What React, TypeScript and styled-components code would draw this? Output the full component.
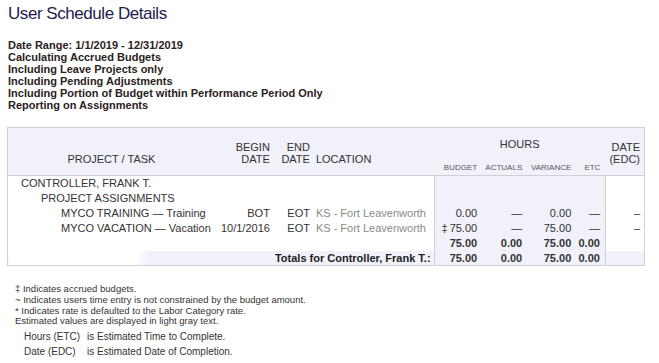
import styled, { createGlobalStyle } from 'styled-components';

const GlobalStyle = createGlobalStyle`
  body {
    margin: 0;
    background: #fff;
    font-family: 'Liberation Sans', Arial, sans-serif;
  }
`;

const Colors = {
  ink: '#2b2b2b',
  navy: '#1d1d4f',
  lavender: '#f1f1fa',
  line: '#cfcfd6',
  gray: '#8a8a8a',
};

const Page = styled.div`
  padding: 3px 8px 0 8px;
  color: ${Colors.ink};
`;

const Title = styled.h1`
  margin: 0;
  font-size: 17px;
  letter-spacing: -0.45px;
  line-height: 21px;
  font-weight: normal;
  color: ${Colors.navy};
`;

const Criteria = styled.div`
  margin-top: 15px;
  font-size: 11px;
  line-height: 12px;
  font-weight: bold;
  color: #2a2222;
`;

const Table = styled.table`
  margin-top: 16px;
  margin-left: -1px;
  border-collapse: collapse;
  table-layout: fixed;
  width: 638px;
  border: 1px solid ${Colors.line};
  font-size: 11px;
  line-height: 12px;
`;

const HeadRow = styled.tr`
  background: ${Colors.lavender};
`;

const Th = styled.th<{ align?: 'left' | 'right' | 'center'; pr?: number }>`
  font-weight: normal;
  color: #333;
  text-align: ${({ align }) => align || 'left'};
  padding: 0 ${({ pr }) => pr ?? 3}px 0 3px;
  vertical-align: bottom;
`;

const MainTh = styled(Th)`
  padding-bottom: 10px;
  border-bottom: 1px solid ${Colors.line};
`;

const GroupTh = styled(Th)`
  vertical-align: top;
  padding-top: 10px;
  height: 25px;
`;

const SubTh = styled(Th)`
  font-size: 8px;
  line-height: 9px;
  color: #555;
  padding-bottom: 3px;
  border-bottom: 1px solid ${Colors.line};
`;

const Row = styled.tr<{ total?: boolean }>`
  height: 15px;
  font-weight: ${({ total }) => (total ? 'bold' : 'normal')};
`;

const Td = styled.td<{
  indent?: number;
  align?: 'left' | 'right';
  pr?: number;
  hours?: boolean;
  edge?: boolean;
  muted?: boolean;
  shade?: boolean;
}>`
  padding: 0 ${({ pr }) => pr ?? 3}px 0 ${({ indent }) => indent ?? 3}px;
  text-align: ${({ align }) => align || 'left'};
  white-space: nowrap;
  overflow: hidden;
  color: ${({ muted }) => (muted ? Colors.gray : '#333')};
  background: ${({ hours, shade }) => (hours || shade ? Colors.lavender : 'transparent')};
  border-left: ${({ edge }) => (edge ? `1px solid ${Colors.line}` : 'none')};
`;

const TotalLabel = styled(Td)`
  background: linear-gradient(to right, #fff 128px, ${Colors.lavender} 140px);
  color: #222;
`;

const Accrued = styled.span`
  float: left;
  padding-left: 4px;
`;

const Notes = styled.div`
  margin-top: 18px;
  padding-left: 7px;
  font-size: 9.5px;
  line-height: 10.8px;
  color: #333;
`;

const Legend = styled.div`
  display: grid;
  grid-template-columns: 63px auto;
  grid-auto-rows: 15px;
  align-items: center;
  padding-left: 9px;
  margin-top: 3px;
  font-size: 10px;
`;

const widths = [207, 58, 40, 121, 46, 45, 48, 32, 39];

interface Line {
  label: string;
  indent: number;
  begin?: string;
  end?: string;
  location?: string;
  budget?: string;
  accrued?: boolean;
  actuals?: string;
  variance?: string;
  etc?: string;
  edc?: string;
}

const lines: Line[] = [
  { label: 'CONTROLLER, FRANK T.', indent: 13 },
  { label: 'PROJECT ASSIGNMENTS', indent: 33 },
  {
    label: 'MYCO TRAINING \u2014 Training',
    indent: 53,
    begin: 'BOT',
    end: 'EOT',
    location: 'KS - Fort Leavenworth',
    budget: '0.00',
    actuals: '\u2014',
    variance: '0.00',
    etc: '\u2014',
    edc: '\u2013',
  },
  {
    label: 'MYCO VACATION \u2014 Vacation',
    indent: 53,
    begin: '10/1/2016',
    end: 'EOT',
    location: 'KS - Fort Leavenworth',
    budget: '75.00',
    accrued: true,
    actuals: '\u2014',
    variance: '75.00',
    etc: '\u2014',
    edc: '\u2013',
  },
];

export default function App() {
  return (
    <Page>
      <GlobalStyle />
      <Title>User Schedule Details</Title>
      <Criteria>
        <div>Date Range: 1/1/2019 - 12/31/2019</div>
        <div>Calculating Accrued Budgets</div>
        <div>Including Leave Projects only</div>
        <div>Including Pending Adjustments</div>
        <div>Including Portion of Budget within Performance Period Only</div>
        <div>Reporting on Assignments</div>
      </Criteria>

      <Table>
        <colgroup>
          {widths.map((w, i) => (
            <col key={i} style={{ width: w }} />
          ))}
        </colgroup>
        <thead>
          <HeadRow>
            <MainTh rowSpan={2} align="center">PROJECT / TASK</MainTh>
            <MainTh rowSpan={2} align="right">BEGIN<br />DATE</MainTh>
            <MainTh rowSpan={2} align="right">END<br />DATE</MainTh>
            <MainTh rowSpan={2}>LOCATION</MainTh>
            <GroupTh colSpan={4} align="center">HOURS</GroupTh>
            <MainTh rowSpan={2} pr={4} align="right">DATE<br />(EDC)</MainTh>
          </HeadRow>
          <HeadRow>
            <SubTh align="right">BUDGET</SubTh>
            <SubTh align="right">ACTUALS</SubTh>
            <SubTh align="right" pr={2}>VARIANCE</SubTh>
            <SubTh align="right" pr={5}>ETC</SubTh>
          </HeadRow>
        </thead>
        <tbody>
          {lines.map((l) => (
            <Row key={l.label}>
              <Td indent={l.indent}>{l.label}</Td>
              <Td align="right">{l.begin}</Td>
              <Td align="right">{l.end}</Td>
              <Td muted>{l.location}</Td>
              <Td hours edge align="right">
                {l.accrued && <Accrued>{'\u2021'}</Accrued>}
                {l.budget}
              </Td>
              <Td hours align="right">{l.actuals}</Td>
              <Td hours align="right" pr={2}>{l.variance}</Td>
              <Td hours align="right" pr={5}>{l.etc}</Td>
              <Td edge align="right" pr={4}>{l.edc}</Td>
            </Row>
          ))}
          <Row total>
            <Td colSpan={4} />
            <Td hours edge align="right">75.00</Td>
            <Td hours align="right">0.00</Td>
            <Td hours align="right" pr={2}>75.00</Td>
            <Td hours align="right" pr={5}>0.00</Td>
            <Td edge />
          </Row>
          <Row total>
            <TotalLabel colSpan={4} align="right">Totals for Controller, Frank T.:</TotalLabel>
            <Td hours edge align="right">75.00</Td>
            <Td hours align="right">0.00</Td>
            <Td hours align="right" pr={2}>75.00</Td>
            <Td hours align="right" pr={5}>0.00</Td>
            <Td edge shade />
          </Row>
        </tbody>
      </Table>

      <Notes>
        <div>{'\u2021'} Indicates accrued budgets.</div>
        <div>~ Indicates users time entry is not constrained by the budget amount.</div>
        <div>* Indicates rate is defaulted to the Labor Category rate.</div>
        <div>Estimated values are displayed in light gray text.</div>
        <Legend>
          <span>Hours (ETC)</span>
          <span>is Estimated Time to Complete.</span>
          <span>Date (EDC)</span>
          <span>is Estimated Date of Completion.</span>
        </Legend>
      </Notes>
    </Page>
  );
}
